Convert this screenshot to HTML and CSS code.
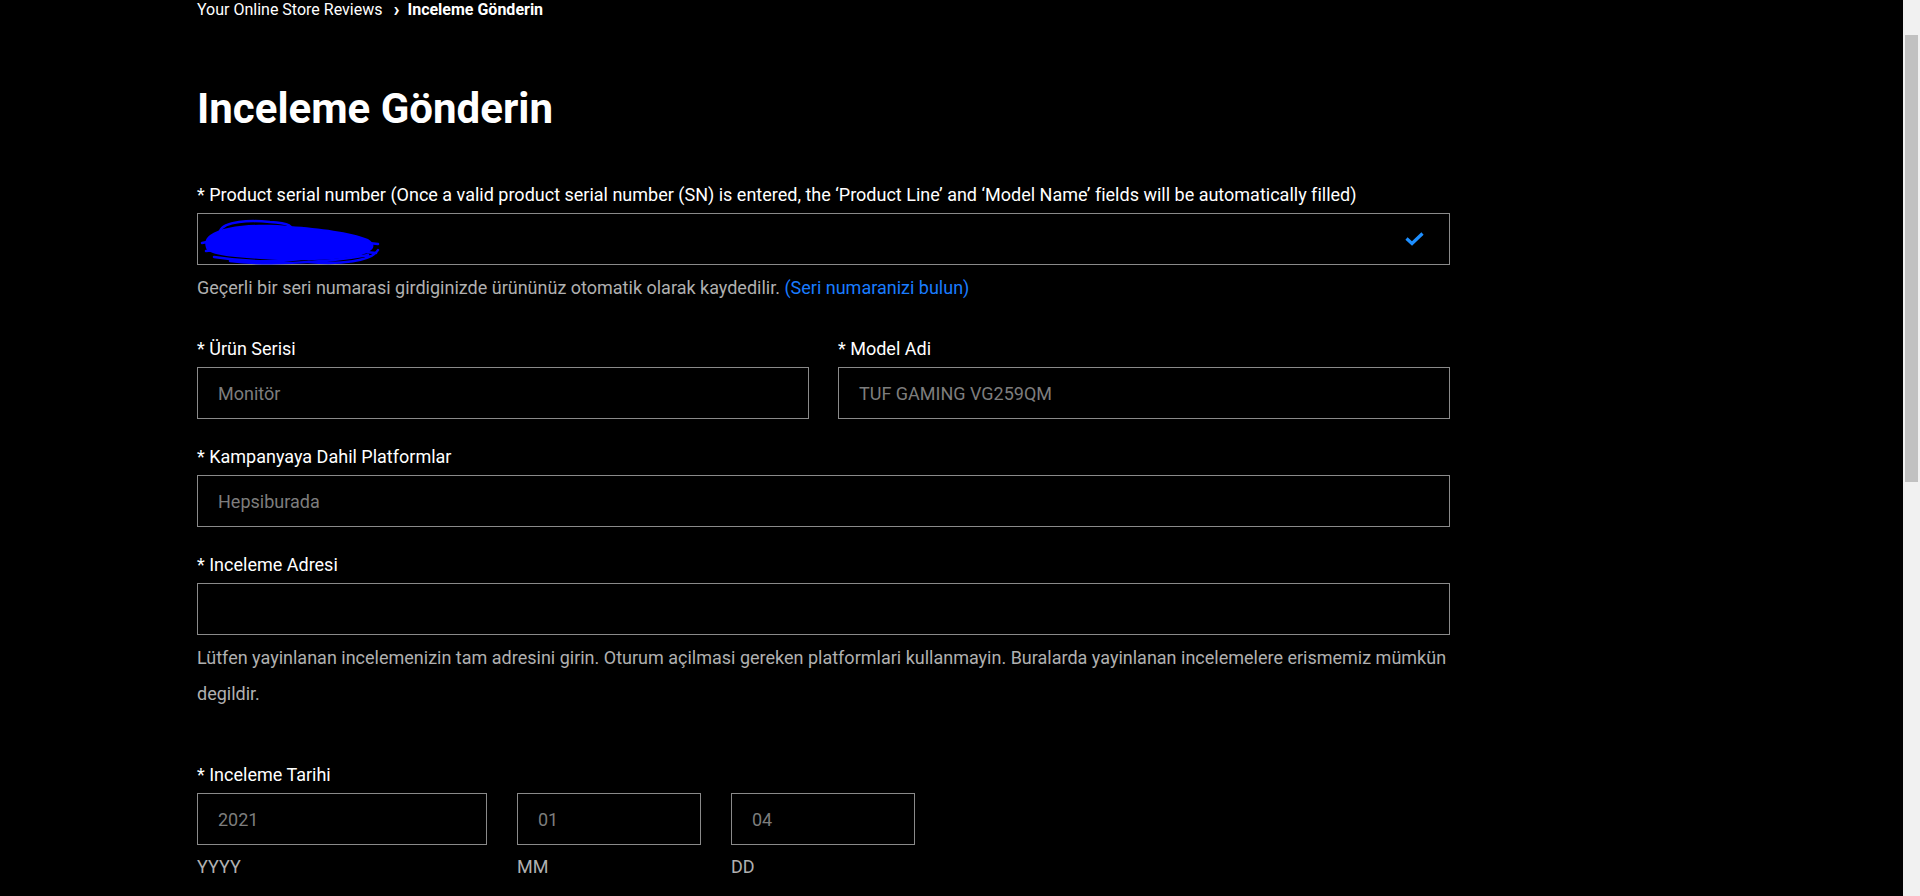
FILE: index.html
```html
<!DOCTYPE html>
<html lang="tr">
<head>
    <meta charset="UTF-8">
    <meta name="viewport" content="width=device-width, initial-scale=1.0">
    <title>Inceleme Gönderin</title>
    <link rel="stylesheet" href="styles.css">
</head>
<body>

<div class="page">
    <div class="crumbs">
        <span>Your Online Store Reviews</span>
        <span class="crumbArrow">&#8250;</span>
        <b>Inceleme Gönderin</b>
    </div>

    <h1 class="pageTitle">Inceleme Gönderin</h1>

    <div class="field withHelp">
        <div class="label">* Product serial number (Once a valid product serial number (SN) is entered, the ‘Product Line’ and ‘Model Name’ fields will be automatically filled)</div>
        <div class="inputBox snBox">
            <svg class="scribble" width="182" height="48" viewBox="0 0 182 48">
                <path d="M10 18 C24 8 60 6 90 9 C120 11 150 15 168 22 C178 28 174 35 158 39 C130 44 90 44 60 42 C30 40 8 38 6 31 C4 25 6 21 10 18 Z" fill="#0000ff"/>
                <path d="M20 14 C24 4 50 3 70 5 C90 6 94 10 90 14 M30 44 C60 48 120 47 168 38 M2 26 C30 20 100 18 178 27 M108 45 C140 48 172 44 178 33 M6 34 C40 30 120 30 176 36 M14 40 C40 44 70 46 100 42" stroke="#0000ff" stroke-width="2.5" fill="none" stroke-linecap="round"/>
            </svg>
            <svg class="check" width="19" height="14" viewBox="0 0 19 14">
                <path d="M1.5 6.5 L7 11.5 L17.5 1.5" stroke="#1e8fff" stroke-width="3.2" fill="none"/>
            </svg>
        </div>
        <div class="help">Geçerli bir seri numarasi girdiginizde ürününüz otomatik olarak kaydedilir. <a class="helpLink" href="#">(Seri numaranizi bulun)</a></div>
    </div>

    <div class="row">
        <div class="field col">
            <div class="label">* Ürün Serisi</div>
            <div class="inputBox"><span class="val">Monitör</span></div>
        </div>
        <div class="field col">
            <div class="label">* Model Adi</div>
            <div class="inputBox"><span class="val">TUF GAMING VG259QM</span></div>
        </div>
    </div>

    <div class="field">
        <div class="label">* Kampanyaya Dahil Platformlar</div>
        <div class="inputBox"><span class="val">Hepsiburada</span></div>
    </div>

    <div class="field withHelp2">
        <div class="label">* Inceleme Adresi</div>
        <div class="inputBox"></div>
        <div class="help">Lütfen yayinlanan incelemenizin tam adresini girin. Oturum açilmasi gereken platformlari kullanmayin. Buralarda yayinlanan incelemelere erismemiz mümkün degildir.</div>
    </div>

    <div class="field">
        <div class="label">* Inceleme Tarihi</div>
        <div class="dateRow">
            <div class="dateCol yyyy">
                <div class="inputBox"><span class="val">2021</span></div>
                <div class="sub">YYYY</div>
            </div>
            <div class="dateCol mmdd">
                <div class="inputBox"><span class="val">01</span></div>
                <div class="sub">MM</div>
            </div>
            <div class="dateCol mmdd">
                <div class="inputBox"><span class="val">04</span></div>
                <div class="sub">DD</div>
            </div>
        </div>
    </div>
</div>

<!-- 滚动条 -->
<div class="scrollTrack"><div class="scrollThumb"></div></div>

</body>
</html>
```

FILE: styles.css
```css
* {margin:0;padding:0;box-sizing:border-box;}
html,body {background:#000;}
body {
    color: #fff;
    font-family: Roboto, "Liberation Sans", sans-serif;
    font-size: 18px;
}
.page{
    width: 1253px;
    margin-left: 197px;
    min-height: 1728px;
}

/* 面包屑 */
.crumbs{
    height: 20px;
    line-height: 20px;
    font-size: 16px;
    display: flex;
    align-items: center;
}
.crumbArrow{
    font-weight: 700;
    font-size: 20px;
    margin: 0 8px 0 11px;
    position: relative;
    top: -1px;
}
.crumbs b{font-weight: 700;}

.pageTitle{
    font-size: 42px;
    font-weight: 700;
    line-height: 50px;
    margin-top: 64px;
    margin-bottom: 48px;
}

/* 表单 */
.field{
    margin-bottom: 25px;
}
.label{
    line-height: 26px;
    margin-bottom: 5px;
}
.inputBox{
    height: 52px;
    border: 1px solid #8a8a8a;
    padding: 0 20px;
    display: flex;
    align-items: center;
    position: relative;
}
.val{
    color: #7d7d7d;
}
.snBox{
    justify-content: flex-end;
    padding-right: 25px;
}
.scribble{
    position: absolute;
    left: 2px;
    top: 3px;
}
.help{
    color: #b0b0b0;
    line-height: 36px;
    margin-top: 5px;
}
.helpLink{
    color: #1a7cff;
    text-decoration: none;
}
.withHelp{margin-bottom: 30px;}
.withHelp2{margin-bottom: 50px;}

.row{
    display: flex;
    gap: 29px;
}
.col{flex: 1;}

.dateRow{
    display: flex;
    gap: 30px;
}
.yyyy{width: 290px;}
.mmdd{width: 184px;}
.sub{
    color: #b0b0b0;
    line-height: 36px;
    margin-top: 4px;
}

.scrollTrack{
    position: fixed;
    top: 0;
    right: 0;
    width: 17px;
    height: 100%;
    background: #f1f1f1;
}
.scrollThumb{
    margin: 35px 2px 0 2px;
    height: 447px;
    background: #c1c1c1;
}
```
